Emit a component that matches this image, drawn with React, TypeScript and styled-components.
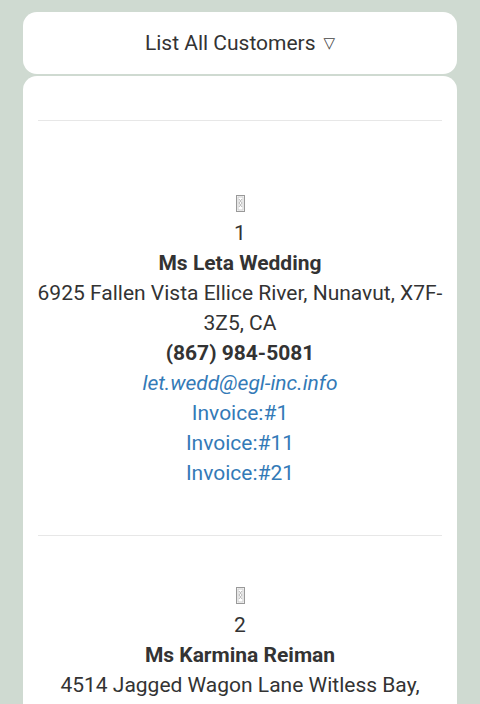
import React from "react";
import styled, { createGlobalStyle } from "styled-components";

const Global = createGlobalStyle`
  html, body { margin: 0; padding: 0; background: #cfdad1; }
  body { font-family: Roboto, "Liberation Sans", sans-serif; color: #333; }
`;

const Page = styled.div`
  padding: 12px 23px 0;
  display: flex;
  flex-direction: column;
  gap: 2px;
`;

const HeaderCard = styled.div`
  background: #fff;
  border-radius: 14px;
  height: 62px;
  display: flex;
  align-items: center;
  justify-content: center;
  font-size: 21px;
  color: #333;
`;

const Caret = styled.span`
  margin-left: 8px;
  font-size: 15px;
  font-family: "DejaVu Sans", sans-serif;
  color: #444;
`;

const ListCard = styled.div`
  background: #fff;
  border-radius: 14px 14px 0 0;
  padding: 44px 8px 0;
`;

const Divider = styled.hr`
  border: none;
  border-top: 1px solid #e7e7e7;
  margin: 0 7px;
`;

const Item = styled.div<{ $first?: boolean }>`
  padding: ${(p) => (p.$first ? "67px" : "44px")} 0 47px;
  display: flex;
  flex-direction: column;
  align-items: center;
  text-align: center;
  font-size: 21px;
  line-height: 30px;
`;

const IconLine = styled.div`
  height: 30px;
  display: flex;
  align-items: center;
  justify-content: center;
`;

const Name = styled.div`
  font-weight: 700;
`;

const Phone = styled.div`
  font-weight: 700;
`;

const Link = styled.a<{ $italic?: boolean }>`
  color: #337ab7;
  text-decoration: none;
  font-style: ${(p) => (p.$italic ? "italic" : "normal")};
`;

const MissingGlyph = () => (
  <svg width="9" height="17" viewBox="0 0 9 17">
    <rect x="0.5" y="0.5" width="8" height="16" fill="none" stroke="#999" />
    <rect x="2" y="2" width="5" height="13" fill="none" stroke="#ccc" />
    <path d="M3 4 L6 8 L3 12 M6 4 L3 8 L6 12" stroke="#aaa" fill="none" strokeWidth="0.8" />
  </svg>
);

type Customer = {
  id: number;
  name: string;
  address: string;
  phone?: string;
  email?: string;
  invoices: number[];
};

const customers: Customer[] = [
  {
    id: 1,
    name: "Ms Leta Wedding",
    address: "6925 Fallen Vista Ellice River, Nunavut, X7F-3Z5, CA",
    phone: "(867) 984-5081",
    email: "let.wedd@egl-inc.info",
    invoices: [1, 11, 21],
  },
  {
    id: 2,
    name: "Ms Karmina Reiman",
    address: "4514 Jagged Wagon Lane Witless Bay, Newfoundland, A1B-2C3, CA",
    phone: "(709) 555-0192",
    email: "kar.reim@egl-inc.info",
    invoices: [2, 12, 22],
  },
];

export default function App() {
  return (
    <>
      <Global />
      <Page>
        <HeaderCard>
          List All Customers<Caret>▽</Caret>
        </HeaderCard>
        <ListCard>
          {customers.map((c, i) => (
            <React.Fragment key={c.id}>
              <Divider />
              <Item $first={i === 0}>
                <IconLine>
                  <MissingGlyph />
                </IconLine>
                <div>{c.id}</div>
                <Name>{c.name}</Name>
                <div>{c.address}</div>
                {c.phone && <Phone>{c.phone}</Phone>}
                {c.email && (
                  <Link $italic href="#">
                    {c.email}
                  </Link>
                )}
                {c.invoices.map((n) => (
                  <Link key={n} href="#">
                    Invoice:#{n}
                  </Link>
                ))}
              </Item>
            </React.Fragment>
          ))}
        </ListCard>
      </Page>
    </>
  );
}
